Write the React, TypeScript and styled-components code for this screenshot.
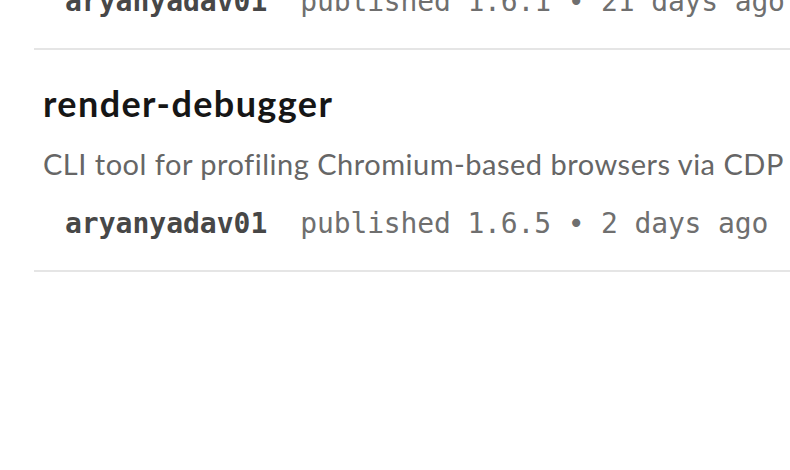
import React from "react";
import styled, { createGlobalStyle } from "styled-components";

const Global = createGlobalStyle`
  html, body { margin: 0; padding: 0; background: #ffffff; }
  body { overflow: hidden; width: 790px; height: 470px; }
`;

const List = styled.section`
  margin-left: 34px;
  margin-top: -14px;
`;

const Item = styled.article<{ $partial?: boolean }>`
  padding: ${(p) => (p.$partial ? "0" : "33px")} 0 30px 9px;
  border-bottom: 2px solid #e5e5e5;
  display: flex;
  flex-direction: column;
`;

const Title = styled.h3`
  margin: 0 0 23px;
  font-family: Lato, "Noto Sans", sans-serif;
  font-weight: 700;
  font-size: 36px;
  letter-spacing: 1.4px;
  line-height: 40px;
  color: #161616;
`;

const Description = styled.p`
  margin: 0 0 26px;
  font-family: Lato, "Noto Sans", sans-serif;
  font-weight: 400;
  font-size: 29px;
  letter-spacing: 0.5px;
  line-height: 36px;
  color: #666666;
  white-space: nowrap;
`;

const Meta = styled.div`
  display: flex;
  align-items: baseline;
  gap: 33px;
  padding-left: 22px;
  height: 32px;
  line-height: 32px;
  font-family: "DejaVu Sans Mono", "Liberation Mono", monospace;
  font-size: 28px;
  white-space: nowrap;
`;

const Author = styled.span`
  font-weight: 700;
  color: #474747;
`;

const Published = styled.span`
  color: #6f6f6f;
  letter-spacing: -0.15px;
`;

type Pkg = {
  name?: string;
  description?: string;
  author: string;
  version: string;
  when: string;
};

const packages: Pkg[] = [
  { author: "aryanyadav01", version: "1.6.1", when: "21 days ago" },
  {
    name: "render-debugger",
    description: "CLI tool for profiling Chromium-based browsers via CDP",
    author: "aryanyadav01",
    version: "1.6.5",
    when: "2 days ago",
  },
];

export default function App() {
  return (
    <>
      <Global />
      <List>
        {packages.map((p, i) => (
          <Item key={i} $partial={!p.name}>
            {p.name && <Title>{p.name}</Title>}
            {p.description && <Description>{p.description}</Description>}
            <Meta>
              <Author>{p.author}</Author>
              <Published>
                published {p.version} • {p.when}
              </Published>
            </Meta>
          </Item>
        ))}
      </List>
    </>
  );
}
